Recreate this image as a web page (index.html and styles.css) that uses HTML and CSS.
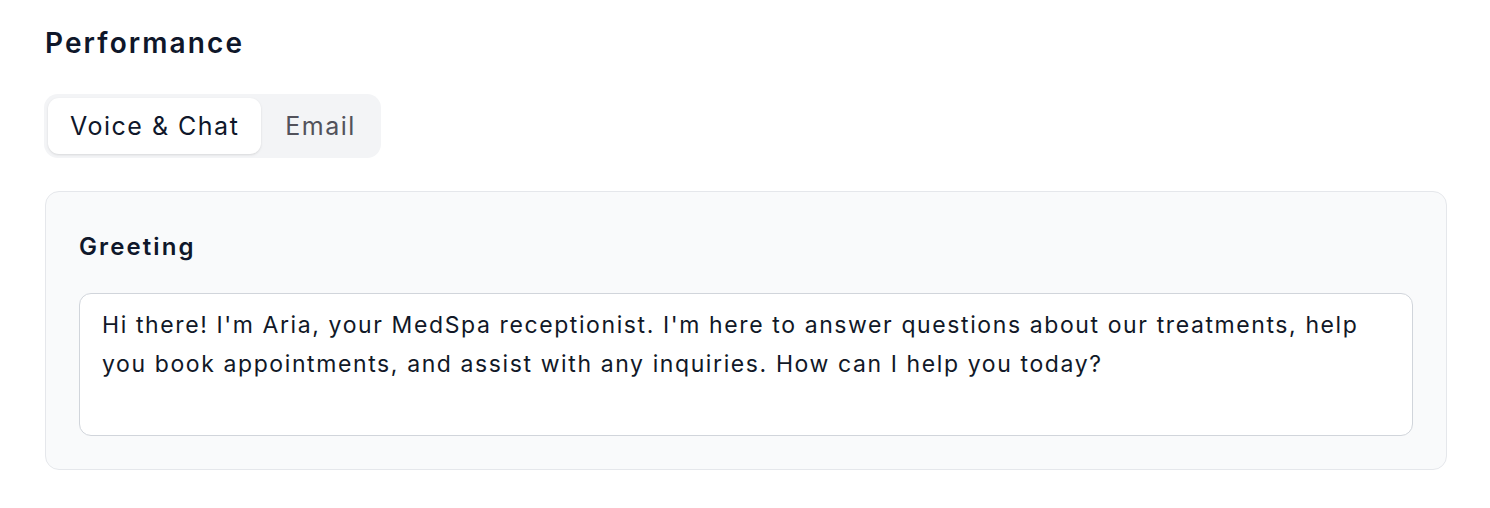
FILE: index.html
```html
<!DOCTYPE html>
<html lang="en">
<head>
<meta charset="utf-8">
<title>Performance</title>
<link rel="stylesheet" href="styles.css">
</head>
<body>
<main class="page">
  <h2 class="title">Performance</h2>
  <div class="tabs">
    <button class="tab active">Voice &amp; Chat</button>
    <button class="tab">Email</button>
  </div>
  <section class="card">
    <label class="label" for="greeting">Greeting</label>
    <textarea id="greeting" class="field">Hi there! I'm Aria, your MedSpa receptionist. I'm here to answer questions about our treatments, help you book appointments, and assist with any inquiries. How can I help you today?</textarea>
  </section>
</main>
</body>
</html>
```

FILE: styles.css
```css
* { box-sizing: border-box; }
html, body { margin: 0; padding: 0; background: #ffffff; }
body { font-family: Inter, "Noto Sans", sans-serif; color: #111827; }
.page { padding: 24px 43px 0 45px; display: flex; flex-direction: column; }
.title { margin: 0; font-size: 28px; font-weight: 600; line-height: 38px; color: #0f172a; letter-spacing: 2.1px; }
.tabs { margin-top: 32px; align-self: flex-start; display: flex; gap: 0; padding: 4px; margin-left: -1px; background: #f3f4f6; border-radius: 14px; }
.tab { font-family: inherit; font-size: 25px; letter-spacing: 1.5px; line-height: 56px; height: 56px; padding: 0 22px; border: none; background: transparent; color: #52525b; border-radius: 11px; cursor: pointer; }
.tab + .tab { padding: 0 21px 0 24px; }
.tab.active { background: #ffffff; color: #0f172a; box-shadow: 0 1px 3px rgba(0,0,0,0.08), 0 1px 2px rgba(0,0,0,0.04); }
.card { margin-top: 33px; border: 1.5px solid #e5e7eb; border-radius: 14px; background: #f9fafb; padding: 39px 33px 33px 33px; display: flex; flex-direction: column; }
.label { font-size: 24px; font-weight: 600; line-height: 32px; color: #0f172a; letter-spacing: 2.1px; }
.field { margin-top: 30px; height: 143px; resize: none; font-family: inherit; font-size: 23px; letter-spacing: 1.6px; line-height: 39px; color: #111827; padding: 12px 22px 11px 22px; border: 1.5px solid #d1d5db; border-radius: 12px; background: #ffffff; outline: none; }
```
